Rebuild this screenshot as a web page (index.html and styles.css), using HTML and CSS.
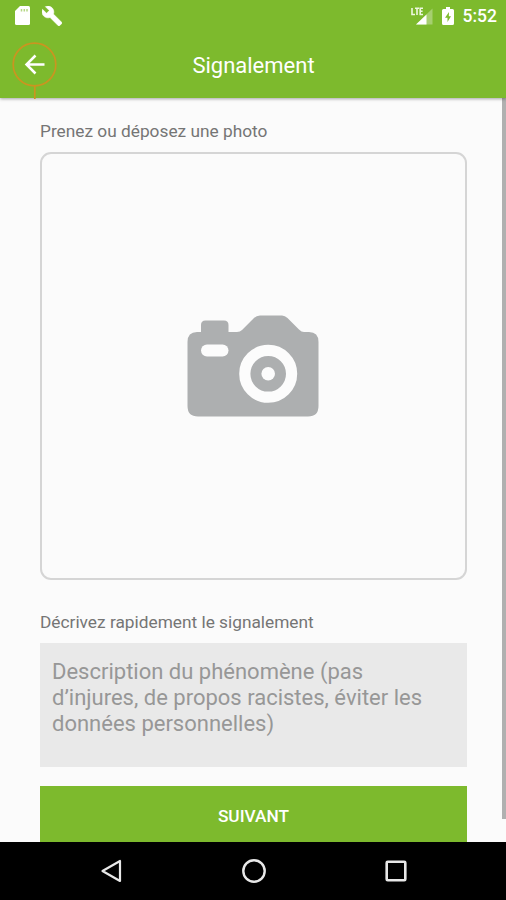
FILE: index.html
```
<!DOCTYPE html>
<html lang="fr">
<head>
  <meta charset="UTF-8">
  <meta name="viewport" content="width=device-width, initial-scale=1.0">
  <title>Signalement</title>
  <link rel="stylesheet" href="styles.css">
</head>
<body>
  <header>
    <!-- status bar -->
    <div class="status">
      <svg class="sd" width="15" height="19" viewBox="0 0 15 19">
        <path d="M5 0H13.5Q15 0 15 1.5V17.5Q15 19 13.5 19H1.5Q0 19 0 17.5V5Z" fill="#fff"/>
        <path d="M6.500 3v2.500M9.300 3v2.500M12 3v2.500" stroke="#b5d784" stroke-width="1.500"/>
      </svg>
      <svg class="wrench" width="20" height="20" viewBox="1 1 22 22">
        <path d="M22.7 19l-9.1-9.1c.9-2.3.4-5-1.5-6.9-2-2-5-2.4-7.4-1.3L9 6 6 9 1.6 4.7C.4 7.1.9 10.1 2.9 12.1c1.9 1.9 4.6 2.4 6.900 1.500l9.100 9.100c.4.4 1 .4 1.400 0l2.300-2.300c.5-.4.5-1.100.1-1.400z" fill="#fff" stroke="#fff" stroke-width=".6"/>
      </svg>
      <svg class="signal" width="22" height="18" viewBox="0 0 22 18">
        <path d="M21.500 1.500V17.500H5Z" fill="#a6cf70"/>
        <path d="M15.500 7.500V17.500H5Z" fill="#fff"/>
        <path d="M1 1V7.500H4M4 1.200H8M6 1.200V8M12 1.200H9.200V7.500H12M9.200 4.300H11.600" fill="none" stroke="#eef8e0" stroke-width="1.600"/>
      </svg>
      <svg class="battery" width="12" height="18" viewBox="0 0 12 18">
        <path d="M4 0H8V2H10.500Q12 2 12 3.500V16.500Q12 18 10.500 18H1.500Q0 18 0 16.500V3.500Q0 2 1.500 2H4Z" fill="#fff"/>
        <path d="M7 5L3 10.700H5.500V15L9 9.300H6.800Z" fill="#7dba2d"/>
      </svg>
      <span class="clock">5:52</span>
    </div>
    <div class="toolbar">
      <button class="back" aria-label="Retour">
        <svg width="46" height="57" viewBox="0 0 46 57">
          <g fill="none" stroke="#cb9420" stroke-width="1.700">
            <circle cx="22.500" cy="22.500" r="21.300"/>
            <path d="M22.800 44V57"/>
          </g>
          <path d="M32.500 22.500H14.500M23.500 13.500L14.500 22.500L23.500 31.500" fill="none" stroke="#fff" stroke-width="2.500"/>
        </svg>
      </button>
      <h1>Signalement</h1>
    </div>
  </header>

  <main>
    <p class="label">Prenez ou déposez une photo</p>
    <div class="photo">
      <svg width="132" height="102" viewBox="0 0 132 102">
        <path d="M10 17H14V10Q14 5.500 18.500 5.500H37Q41.500 5.500 41.500 10V17H50Q53 17 55 15L67 3Q69.500 .5 73 .5H95Q98 .5 100.500 3L112 14.500Q114.500 17 117 17H122Q131.500 17 131.500 27V91Q131.500 101.500 121 101.500H11Q.5 101.500 .5 91V27Q.5 17 10 17Z" fill="#adafb0"/>
        <rect x="14" y="29.500" width="27.500" height="12" rx="6" fill="#fcfcfc"/>
        <circle cx="81.200" cy="58.800" r="23.400" fill="none" stroke="#fcfcfc" stroke-width="11.200"/>
        <circle cx="81.200" cy="58.800" r="6.800" fill="#fcfcfc"/>
      </svg>
    </div>
    <p class="label second">Décrivez rapidement le signalement</p>
    <textarea placeholder="Description du phénomène (pas d’injures, de propos racistes, éviter les données personnelles)"></textarea>
    <button class="next">SUIVANT</button>
    <div class="scrollbar"></div>
  </main>

  <!-- android buttons -->
  <nav>
    <svg width="22" height="24" viewBox="0 0 22 24">
      <path d="M20 2V22L2.500 12Z" fill="none" stroke="#e8e8e8" stroke-width="2.200" stroke-linejoin="round"/>
    </svg>
    <svg width="24" height="24" viewBox="0 0 24 24">
      <circle cx="12" cy="12" r="10.700" fill="none" stroke="#e8e8e8" stroke-width="2.400"/>
    </svg>
    <svg width="22" height="22" viewBox="0 0 22 22">
      <rect x="1.700" y="1.700" width="18.600" height="18.600" rx="1" fill="none" stroke="#e8e8e8" stroke-width="2.600"/>
    </svg>
  </nav>
</body>
</html>
```
FILE: styles.css
```
* {
  box-sizing: border-box;
}
body {
  margin: 0;
  height: 900px;
  display: flex;
  flex-direction: column;
  overflow: hidden;
  font-family: Roboto, "Liberation Sans", sans-serif;
  background-color: #fbfbfb;
}
header {
  height: 98px;
  flex: none;
  background-color: #7dba2d;
  color: #fff;
  box-shadow: 0 1px 3px rgba(0, 0, 0, 0.35);
  position: relative;
  z-index: 1;
}
.status {
  height: 31px;
  display: flex;
  align-items: center;
  padding: 0 9px 0 15px;
}
.wrench {
  margin-left: 12px;
}
.signal {
  margin-left: auto;
}
.battery {
  margin-left: 9px;
}
.clock {
  margin-left: 9px;
  font-size: 17.5px;
  font-weight: 500;
  line-height: 32px;
}
.toolbar {
  display: flex;
  height: 67px;
  padding: 11px 12px 0;
}
.back {
  width: 46px;
  height: 56px;
  padding: 0;
  border: none;
  background: none;
}
.back svg {
  display: block;
}
h1 {
  flex: 1;
  margin: 0 45px 0 0;
  text-align: center;
  font-size: 22px;
  font-weight: 400;
  line-height: 48px;
}

main {
  flex: 1;
  min-height: 0;
  padding: 22px 39px 0 40px;
  display: flex;
  flex-direction: column;
  position: relative;
  overflow: hidden;
}
.label {
  margin: 0;
  font-size: 17.3px;
  line-height: 22px;
  color: #757575;
}
.photo {
  height: 428px;
  flex: none;
  margin-top: 10px;
  padding-right: 2px;
  display: flex;
  align-items: center;
  justify-content: center;
  border: 2px solid #d5d5d5;
  border-radius: 11px;
}
.second {
  margin-top: 31px;
}
textarea {
  height: 124px;
  flex: none;
  margin-top: 10px;
  padding: 16px 30px 12px 12px;
  border: none;
  resize: none;
  overflow: hidden;
  background-color: #e9e9e9;
  font-family: inherit;
  font-size: 22px;
  line-height: 26px;
}
textarea::placeholder {
  color: #979797;
}
.next {
  height: 60px;
  flex: none;
  margin-top: 19px;
  padding: 0;
  border: none;
  background-color: #7dba2d;
  color: #fff;
  font-family: inherit;
  font-size: 17.3px;
  font-weight: 500;
}
.scrollbar {
  position: absolute;
  top: 0;
  right: 0;
  width: 4px;
  height: 721px;
  background-color: #b0b0b0;
}

nav {
  height: 58px;
  flex: none;
  display: flex;
  align-items: center;
  justify-content: space-between;
  padding: 0 99px 0 100px;
  background-color: #000;
}
```
